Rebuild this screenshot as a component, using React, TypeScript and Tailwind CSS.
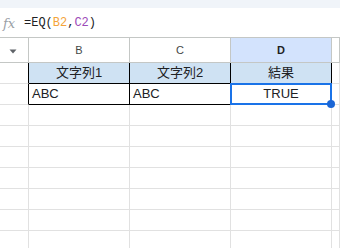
import React from "react";

const grid = "border-[#e1e1e1]";

function Cell({
  children,
  className = "",
}: {
  children?: React.ReactNode;
  className?: string;
}) {
  return (
    <div className={`h-full border-r border-b flex items-center shrink-0 ${className}`}>
      {children}
    </div>
  );
}

export default function App() {
  const emptyRows = [0, 1, 2, 3, 4, 5, 6];

  return (
    <div
      className="relative w-[340px] h-[248px] overflow-hidden bg-white text-[#202124]"
      style={{ fontFamily: '"Liberation Sans", "Noto Sans CJK JP", Arial, sans-serif' }}
    >
      {/* top strip */}
      <div className="h-[8px] bg-[#f0f4f9]" />

      {/* formula bar */}
      <div className="h-[30px] flex items-center border-b border-[#c4c7c5]">
        <span
          className="ml-[3px] mt-[1px] w-[14px] text-[13px] italic text-[#9aa0a6] leading-none"
          style={{ fontFamily: '"DejaVu Serif", serif' }}
        >
          fx
        </span>
        <span
          className="ml-[7px] text-[12px] leading-none text-[#202124]"
          style={{ fontFamily: '"Liberation Mono", "DejaVu Sans Mono", monospace' }}
        >
          =EQ(<span className="text-[#f4a43a]">B2</span>,<span className="text-[#9c4ab8]">C2</span>)
        </span>
      </div>

      {/* column headers */}
      <div className="h-[25px] flex text-[11px] text-[#444746]">
        <Cell className="w-[29px] justify-center border-[#c4c7c5]">
          <svg width="8" height="5" viewBox="0 0 8 5" className="ml-[-2px] mt-[2px]">
            <path d="M0.5 0.5 L7.5 0.5 L4 4.5 Z" fill="#5f6368" />
          </svg>
        </Cell>
        <Cell className="w-[101px] justify-center border-[#c4c7c5]">B</Cell>
        <Cell className="w-[101px] justify-center border-[#c4c7c5]">C</Cell>
        <Cell className="w-[101px] justify-center border-[#c4c7c5] bg-[#d3e3fd] font-bold text-[#1f1f1f]">
          D
        </Cell>
        <Cell className="flex-1 border-[#c4c7c5]" />
      </div>

      {/* row 1 */}
      <div className="h-[21px] flex text-[13px]">
        <Cell className={`w-[29px] ${grid} border-r-black`} />
        <Cell className="w-[101px] justify-center bg-[#cfe2f3] border-black">文字列1</Cell>
        <Cell className="w-[101px] justify-center bg-[#cfe2f3] border-black">文字列2</Cell>
        <Cell className="w-[101px] justify-center bg-[#cfe2f3] border-black">結果</Cell>
        <Cell className={`flex-1 ${grid}`} />
      </div>

      {/* row 2 */}
      <div className="h-[21px] flex text-[13px]">
        <Cell className={`w-[29px] ${grid} border-r-black`} />
        <Cell className="w-[101px] pl-[3px] border-black">ABC</Cell>
        <Cell className="w-[101px] pl-[3px] border-black">ABC</Cell>
        <Cell className="w-[101px] justify-center border-black">TRUE</Cell>
        <Cell className={`flex-1 ${grid}`} />
      </div>

      {emptyRows.map((r) => (
        <div key={r} className="h-[21px] flex">
          <Cell className={`w-[29px] ${grid}`} />
          <Cell className={`w-[101px] ${grid}`} />
          <Cell className={`w-[101px] ${grid}`} />
          <Cell className={`w-[101px] ${grid}`} />
          <Cell className={`flex-1 ${grid}`} />
        </div>
      ))}

      {/* selection on D2 */}
      <div className="absolute left-[230px] top-[83px] w-[102px] h-[22px] border-2 border-[#1a73e8]" />
      <div className="absolute left-[327px] top-[100px] w-[8px] h-[8px] rounded-full bg-[#1a66d6]" />
    </div>
  );
}
